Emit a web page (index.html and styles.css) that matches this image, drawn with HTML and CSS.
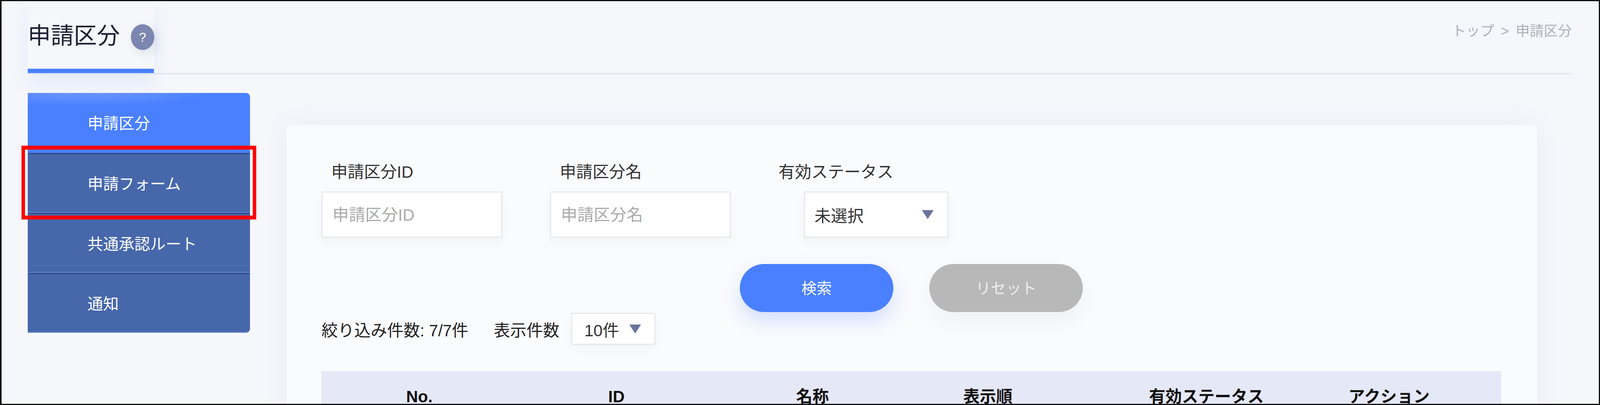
FILE: index.html
```html
<!DOCTYPE html>
<html lang="ja">
<head>
    <meta charset="UTF-8">
    <meta name="viewport" content="width=device-width, initial-scale=1.0">
    <title>申請区分</title>
    <link rel="stylesheet" href="styles.css">
</head>
<body>
    <div class="frame">
        <header class="pageHeader">
            <div class="titleTab">
                <h1 class="pageTitle">申請区分</h1>
                <span class="helpBadge">?</span>
            </div>
            <div class="breadcrumb">トップ<span class="crumbSep">&gt;</span>申請区分</div>
        </header>

        <div class="pageBody">
            <nav class="sideMenu">
                <a class="menuItem active">申請区分</a>
                <a class="menuItem">申請フォーム</a>
                <a class="menuItem">共通承認ルート</a>
                <a class="menuItem">通知</a>
                <div class="redMark"></div>
            </nav>

            <main class="card">
                <div class="filterRow">
                    <div class="field">
                        <label class="fieldLabel">申請区分ID</label>
                        <input class="textInput" type="text" placeholder="申請区分ID">
                    </div>
                    <div class="field">
                        <label class="fieldLabel">申請区分名</label>
                        <input class="textInput" type="text" placeholder="申請区分名">
                    </div>
                    <div class="field">
                        <label class="fieldLabel plain">有効ステータス</label>
                        <div class="selectBox statusSelect">
                            <span>未選択</span>
                            <svg class="selectArrow" viewBox="0 0 32 23" preserveAspectRatio="none"><polygon points="0,0 32,0 16,23"/></svg>
                        </div>
                    </div>
                </div>

                <div class="buttonRow">
                    <button class="pillButton search">検索</button>
                    <button class="pillButton reset">リセット</button>
                </div>

                <div class="countRow">
                    <span class="filterCount">絞り込み件数: 7/7件</span>
                    <span class="perPageLabel">表示件数</span>
                    <div class="selectBox perPageSelect">
                        <span>10件</span>
                        <svg class="selectArrow" viewBox="0 0 32 23" preserveAspectRatio="none"><polygon points="0,0 32,0 16,23"/></svg>
                    </div>
                </div>

                <div class="tableHead">
                    <div class="headCell">No.</div>
                    <div class="headCell">ID</div>
                    <div class="headCell">名称</div>
                    <div class="headCell">表示順</div>
                    <div class="headCell">有効ステータス</div>
                    <div class="headCell">アクション</div>
                </div>
            </main>
        </div>
    </div>
</body>
</html>
```

FILE: styles.css
```css
* {
    box-sizing: border-box;
}

body {
    margin: 0;
    font-family: "Liberation Sans", "Noto Sans CJK JP", sans-serif;
    background-color: #f5f7fb;
}

.frame {
    width: 100vw;
    height: 100vh;
    border: 3px solid #111;
    border-left-width: 4px;
    overflow: hidden;
    background-color: #f5f7fb;
}

/* header */
.pageHeader {
    display: flex;
    justify-content: space-between;
    margin: 0 69px 0 67px;
    border-bottom: 3px solid #e1e5f1;
}

.titleTab {
    display: flex;
    align-items: center;
    gap: 28px;
    width: 323px;
    height: 184px;
    padding-bottom: 48px;
    padding-top: 59px;
    border-bottom: 11px solid #4a80ff;
    box-shadow: 0 26px 50px rgba(74, 128, 255, 0.1);
}

.pageTitle {
    margin: -6px 0 0 0;
    font-size: 59px;
    font-weight: 400;
    line-height: 66px;
    color: #1b2033;
    white-space: nowrap;
}

.helpBadge {
    display: flex;
    align-items: center;
    justify-content: center;
    flex: none;
    width: 60px;
    height: 66px;
    border-radius: 50%;
    background-color: #7d86b0;
    color: #fff;
    font-size: 34px;
    box-shadow: 8px 8px 24px rgba(80, 85, 120, 0.14);
}

.breadcrumb {
    margin-top: 50px;
    font-size: 36px;
    line-height: 54px;
    color: #aeb1ba;
    white-space: nowrap;
}

.crumbSep {
    margin: 0 17px;
}

/* layout below header */
.pageBody {
    display: flex;
    align-items: flex-start;
    padding-left: 67px;
}

/* side menu */
.sideMenu {
    position: relative;
    flex: none;
    width: 569px;
    margin-top: 48px;
    border-radius: 0 10px 10px 0;
}

.menuItem {
    display: flex;
    align-items: center;
    height: 153.5px;
    padding-left: 153px;
    font-size: 40px;
    color: #fff;
    background-color: #4767ab;
    border-top: 3px solid #304b85;
    border-bottom: 3px solid #5a7cc4;
}

.menuItem.active {
    background: radial-gradient(ellipse 60% 22% at 25% 0, #6c96ff, transparent), #4a80ff;
    border-top: none;
    border-bottom-color: #4a78e8;
    border-radius: 0 10px 0 0;
}

.menuItem:last-of-type {
    border-radius: 0 0 10px 0;
}

.redMark {
    position: absolute;
    top: 135px;
    left: -16px;
    width: 601px;
    height: 189px;
    border: 10px solid #ff0000;
    border-left-width: 9px;
    border-right-width: 9px;
}

/* main card */
.card {
    flex: none;
    width: 3202px;
    margin: 130px 0 0 93px;
    padding: 91px 92px 0 90px;
    border-radius: 14px;
    background-color: #fafbfd;
    box-shadow: 0 0 70px rgba(90, 100, 160, 0.07);
}

.filterRow {
    display: flex;
    gap: 122px;
}

.field {
    display: flex;
    flex-direction: column;
}

.fieldLabel {
    height: 60px;
    margin-bottom: 19px;
    padding-left: 25px;
    font-size: 42px;
    line-height: 60px;
    color: #333;
}

.fieldLabel.plain {
    padding-left: 0;
}

.textInput {
    width: 463px;
    height: 119px;
    padding: 3px 25px 0 25px;
    border: 3px solid #e8e8ec;
    background-color: #fff;
    font-family: inherit;
    font-size: 42px;
    box-shadow: 0 14px 24px rgba(60, 60, 90, 0.035);
}

.textInput::placeholder {
    color: #aaa;
    opacity: 1;
}

.selectBox {
    display: flex;
    align-items: center;
    justify-content: space-between;
    border: 3px solid #e8e8ec;
    background-color: #fff;
    font-size: 42px;
    color: #333;
    box-shadow: 0 14px 24px rgba(60, 60, 90, 0.035);
}

.statusSelect {
    width: 370px;
    height: 119px;
    margin-left: 65px;
    padding: 0 35px 0 24px;
}

.perPageSelect {
    width: 216px;
    height: 82px;
    padding: 0 34px 0 31px;
}

.selectArrow {
    flex: none;
    width: 30px;
    height: 23px;
    fill: #6b749e;
}

.buttonRow {
    display: flex;
    justify-content: center;
    gap: 92px;
    margin-top: 67px;
}

.pillButton {
    width: 393px;
    height: 123px;
    padding-bottom: 6px;
    border: none;
    border-radius: 62px;
    font-family: inherit;
    font-size: 39px;
    color: #fff;
}

.pillButton.search {
    background-color: #4a80ff;
    box-shadow: 0 24px 50px rgba(74, 128, 255, 0.22);
}

.pillButton.reset {
    background-color: #b8b8b8;
    color: #eee;
    box-shadow: 0 24px 50px rgba(80, 80, 80, 0.06);
}

.countRow {
    display: flex;
    align-items: center;
    height: 82px;
    margin-top: 2px;
    font-size: 42px;
    color: #222;
}

.filterCount {
    width: 441px;
}

.perPageLabel {
    width: 198px;
}

.tableHead {
    display: grid;
    grid-template-columns: 323px 686px 318px 580px 539px 396px;
    margin-top: 67px;
    padding: 36px 89px 30px 89px;
    background-color: #e5e8f6;
}

.headCell {
    font-size: 42px;
    font-weight: 700;
    line-height: 60px;
    text-align: center;
    color: #111;
    white-space: nowrap;
}
```
